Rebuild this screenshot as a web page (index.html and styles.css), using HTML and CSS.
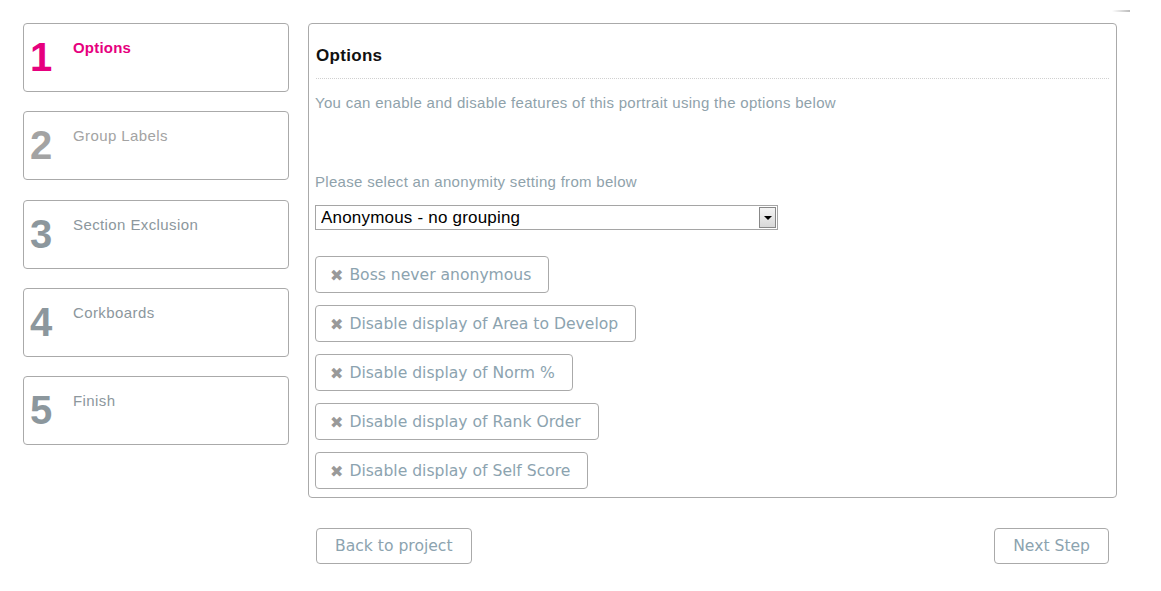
FILE: index.html
```html
<!DOCTYPE html>
<html lang="en">
<head>
  <meta charset="UTF-8" />
  <title>Portrait Options</title>
  <link rel="stylesheet" href="styles.css">
</head>
<body>

  <div class="topbar"><span class="topbar-mark"></span></div>

  <div class="wizard">
    <div class="steps">
      <div class="step active">
        <span class="step-num">1</span>
        <span class="step-label">Options</span>
      </div>
      <div class="step muted">
        <span class="step-num">2</span>
        <span class="step-label">Group Labels</span>
      </div>
      <div class="step">
        <span class="step-num">3</span>
        <span class="step-label">Section Exclusion</span>
      </div>
      <div class="step">
        <span class="step-num">4</span>
        <span class="step-label">Corkboards</span>
      </div>
      <div class="step">
        <span class="step-num">5</span>
        <span class="step-label">Finish</span>
      </div>
    </div>

    <div class="content">
      <div class="panel">
        <h2>Options</h2>
        <p class="intro">You can enable and disable features of this portrait using the options below</p>

        <p class="select-label">Please select an anonymity setting from below</p>
        <div class="select-wrap">
          <select class="anon-select">
            <option>Anonymous - no grouping</option>
          </select>
          <span class="select-arrow"></span>
        </div>

        <div class="toggles">
          <button class="toggle"><span class="toggle-x">✖</span>Boss never anonymous</button>
          <button class="toggle"><span class="toggle-x">✖</span>Disable display of Area to Develop</button>
          <button class="toggle"><span class="toggle-x">✖</span>Disable display of Norm %</button>
          <button class="toggle"><span class="toggle-x">✖</span>Disable display of Rank Order</button>
          <button class="toggle"><span class="toggle-x">✖</span>Disable display of Self Score</button>
        </div>
      </div>

      <div class="actions">
        <button class="nav-btn">Back to project</button>
        <button class="nav-btn">Next Step</button>
      </div>
    </div>
  </div>

</body>
</html>
```

FILE: styles.css
```css
body {
  margin: 0;
  background-color: #fff;
  font-family: 'Liberation Sans', Arial, sans-serif;
  color: #8fa2ab;
}

.topbar {
  height: 23px;
  position: relative;
}

.topbar-mark {
  position: absolute;
  top: 10px;
  left: 1112px;
  width: 18px;
  height: 2px;
  background: linear-gradient(to right, #fff, #bbb);
}

.wizard {
  display: flex;
  align-items: flex-start;
  padding-left: 23px;
  gap: 19px;
}

.steps {
  width: 266px;
  display: flex;
  flex-direction: column;
  gap: 19.25px;
}

.step {
  box-sizing: border-box;
  height: 69px;
  border: 1px solid #aaa;
  border-radius: 4px;
  display: flex;
  align-items: flex-start;
  padding: 15px 0 0 6px;
  color: #8c979d;
}

.step-num {
  width: 43px;
  font-size: 40px;
  font-weight: bold;
  line-height: 40px;
  margin-top: -2px;
}

.step-label {
  font-size: 15px;
  line-height: 18px;
  letter-spacing: 0.4px;
}

.step.active {
  color: #e6007e;
}

.step.active .step-label {
  font-weight: bold;
  letter-spacing: 0.2px;
}

.step.muted {
  color: #a3a3a3;
}

.content {
  width: 809px;
}

.panel {
  box-sizing: border-box;
  border: 1px solid #aaa;
  border-radius: 4px;
  padding: 0 7px 8px 6px;
}

.panel h2 {
  margin: 22px 0 0 1px;
  padding-bottom: 12px;
  font-size: 17px;
  line-height: 20px;
  letter-spacing: 0.3px;
  color: #111;
  border-bottom: 1px dotted #d0d0d0;
}

.intro {
  margin: 15px 0 0;
  font-size: 15px;
  line-height: 18px;
  letter-spacing: 0.3px;
}

.select-label {
  margin: 61px 0 0;
  font-size: 15px;
  line-height: 18px;
  letter-spacing: 0.3px;
}

.select-wrap {
  position: relative;
  width: 463px;
  margin-top: 14px;
}

.anon-select {
  appearance: none;
  -webkit-appearance: none;
  display: block;
  box-sizing: border-box;
  width: 100%;
  height: 25px;
  border: 1px solid #a5a5a5;
  border-radius: 0;
  background: #fff;
  padding: 0 0 0 5px;
  font-family: 'Liberation Sans', Arial, sans-serif;
  font-size: 17px;
  letter-spacing: 0.2px;
  color: #000;
}

.select-arrow {
  position: absolute;
  top: 2px;
  right: 2px;
  width: 17px;
  height: 21px;
  box-sizing: border-box;
  border: 1px solid #888;
  background: linear-gradient(#f4f4f4, #d8d8d8);
  pointer-events: none;
}

.select-arrow::after {
  content: '';
  position: absolute;
  left: 4px;
  top: 8px;
  border-left: 4px solid transparent;
  border-right: 4px solid transparent;
  border-top: 4px solid #000;
}

.toggles {
  display: flex;
  flex-direction: column;
  align-items: flex-start;
  gap: 12px;
  margin-top: 26px;
}

.toggle,
.nav-btn {
  box-sizing: border-box;
  height: 37px;
  background: #fff;
  border: 1px solid #aaa;
  border-radius: 4px;
  font-family: 'DejaVu Sans', Verdana, sans-serif;
  font-size: 15.6px;
  color: #8ca3af;
  cursor: pointer;
}

.toggle {
  display: inline-flex;
  align-items: center;
  padding: 0 17px 0 14px;
}

.toggle-x {
  font-size: 16px;
  color: #999;
  margin: 2px 6px 0 0;
}

.actions {
  display: flex;
  justify-content: space-between;
  margin-top: 30px;
  padding: 0 8px;
}

.nav-btn {
  height: 36px;
  padding: 0 18px;
}
```
